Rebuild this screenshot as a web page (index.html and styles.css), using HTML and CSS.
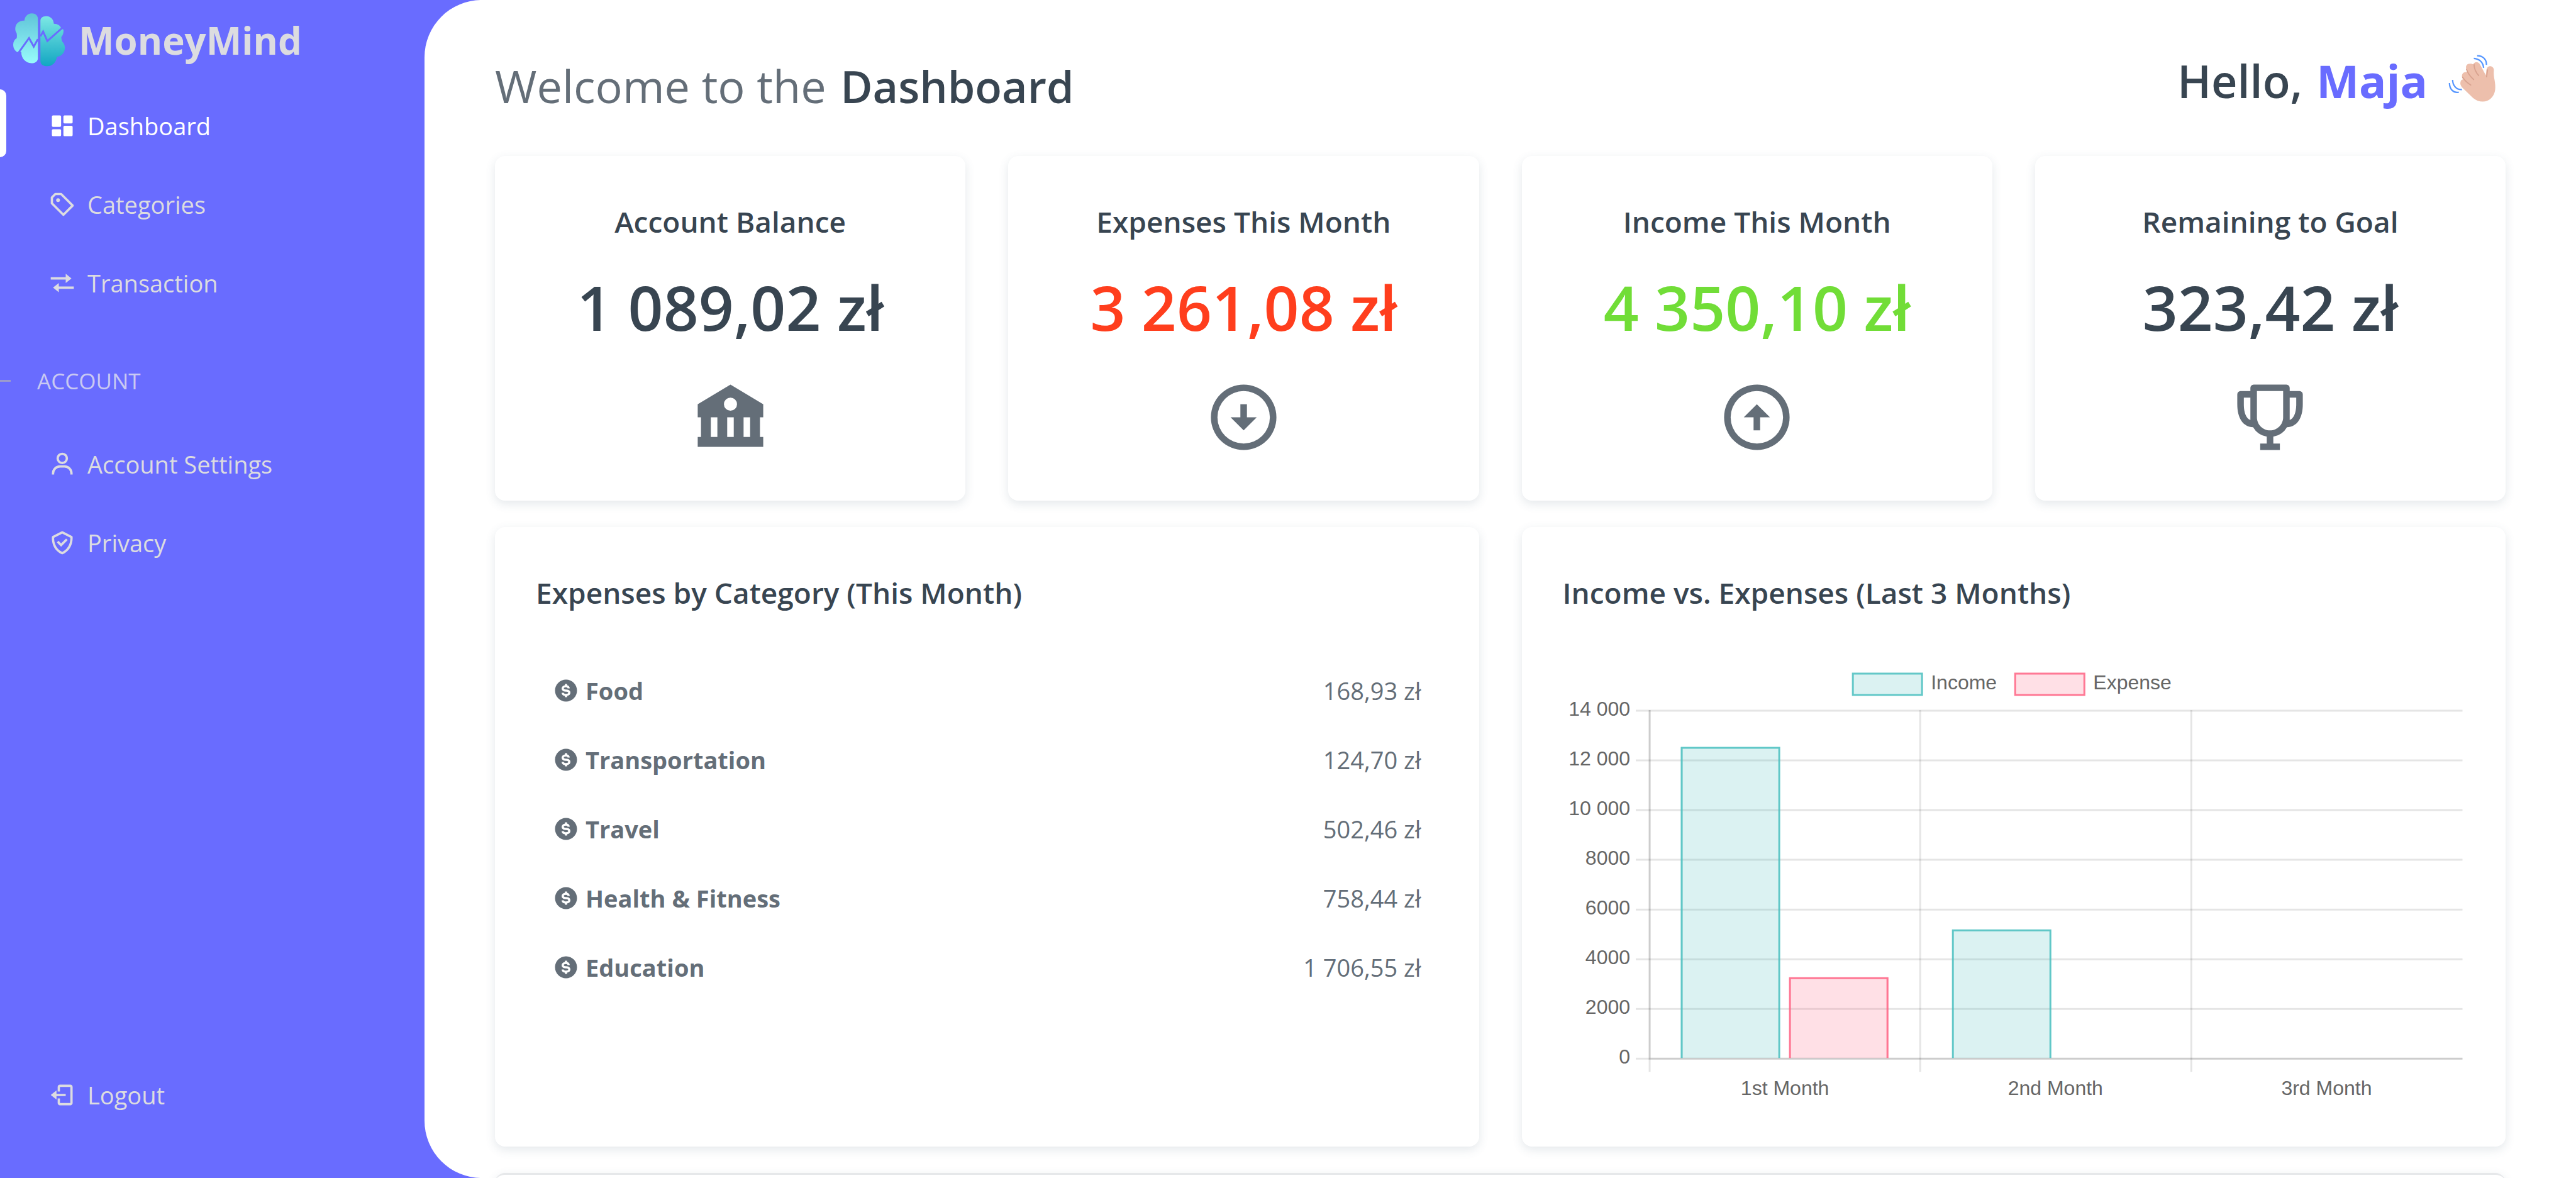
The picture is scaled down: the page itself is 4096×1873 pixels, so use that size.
FILE: index.html
```html
<!DOCTYPE html>
<html lang="en">
<head>
<meta charset="utf-8">
<title>MoneyMind - Dashboard</title>
<link rel="stylesheet" href="styles.css">
</head>
<body>
<svg class="sprite" aria-hidden="true">
  <symbol id="icon-coin" viewBox="0 0 24 24"><path d="M12 2C6.486 2 2 6.486 2 12s4.486 10 10 10 10-4.486 10-10S17.514 2 12 2zm1 14.915V18h-2v-1.080c-2.339-.367-3-2.002-3-2.920h2c.011.143.159 1 2 1 1.380 0 2-.585 2-1 0-.324 0-1-2-1-3.480 0-4-1.880-4-3 0-1.288 1.029-2.584 3-2.915V6.012h2v1.109c1.734.410 2.400 1.853 2.400 2.879h-1l-1 .018C13.386 9.638 13.185 9 12 9c-1.299 0-2 .516-2 1 0 .374 0 1 2 1 3.480 0 4 1.880 4 3 0 1.288-1.029 2.584-3 2.915z"/></symbol>
</svg>
<aside class="sidebar">
  <a class="brand" href="#">
    <svg class="brand-logo" viewBox="0 0 390 390" aria-hidden="true">
      <defs>
        <linearGradient id="brain-left" x1="0" y1="0" x2="0" y2="1"><stop offset="0" stop-color="#5fc4d8"/><stop offset="1" stop-color="#98fbfb"/></linearGradient>
        <linearGradient id="brain-right" x1="0" y1="0" x2="0" y2="1"><stop offset="0" stop-color="#7ce8e4"/><stop offset="1" stop-color="#12a6c2"/></linearGradient>
      </defs>
      <path fill="url(#brain-left)" d="M180 58C180 38 163 25 142 25C117 25 97 43 95 71C60 69 37 92 37 122C37 133 40 142 45 148C48 160 48 172 46 182C32 190 24 205 24 222C24 244 33 262 50 270L75 270C75 310 102 339 139 340C163 341 180 328 180 308Z"/>
      <path fill="url(#brain-right)" d="M196 72C196 54 211 43 233 43C260 43 279 62 281 91C304 91 322 103 328 120L342 128C344 146 339 162 328 175C329 188 331 198 335 205C345 215 351 228 351 242C351 272 330 298 300 300C297 333 272 359 240 359C213 359 196 347 196 326Z"/>
      <path fill="none" stroke="#696cff" stroke-width="12" d="M54 279L124 181L154 235L180 188M196 170L213 140L240 200L342 110"/>
    </svg>
    <span>MoneyMind</span>
  </a>
  <nav class="menu">
    <a class="menu-link active" href="#">
      <svg viewBox="0 0 24 24" aria-hidden="true"><path d="M4 13h6a1 1 0 0 0 1-1V4a1 1 0 0 0-1-1H4a1 1 0 0 0-1 1v8a1 1 0 0 0 1 1zm-1 7a1 1 0 0 0 1 1h6a1 1 0 0 0 1-1v-4a1 1 0 0 0-1-1H4a1 1 0 0 0-1 1v4zm10 0a1 1 0 0 0 1 1h6a1 1 0 0 0 1-1v-7a1 1 0 0 0-1-1h-6a1 1 0 0 0-1 1v7zm1-10h6a1 1 0 0 0 1-1V4a1 1 0 0 0-1-1h-6a1 1 0 0 0-1 1v5a1 1 0 0 0 1 1z"/></svg>
      <span>Dashboard</span>
    </a>
    <a class="menu-link" href="#">
      <svg viewBox="0 0 24 24" aria-hidden="true"><path d="M11.707 2.293A.997.997 0 0 0 11 2H6a.997.997 0 0 0-.707.293l-3 3A.996.996 0 0 0 2 6v5c0 .266.105.520.293.707l10 10a.997.997 0 0 0 1.414 0l8-8a.999.999 0 0 0 0-1.414l-10-10zM13 19.586l-9-9V6.414L6.414 4h4.172l9 9L13 19.586z"/><circle cx="8.353" cy="8.353" r="1.647"/></svg>
      <span>Categories</span>
    </a>
    <a class="menu-link" href="#">
      <svg viewBox="0 0 24 24" aria-hidden="true"><path d="m15 12 5-4-5-4v2.999H2v2h13zm7 3H9v-3l-5 4 5 4v-3h13z"/></svg>
      <span>Transaction</span>
    </a>
    <h2 class="menu-header">ACCOUNT</h2>
    <a class="menu-link" href="#">
      <svg viewBox="0 0 24 24" aria-hidden="true"><path d="M12 2a5 5 0 1 0 5 5 5 5 0 0 0-5-5zm0 8a3 3 0 1 1 3-3 3 3 0 0 1-3 3zm9 11v-1a7 7 0 0 0-7-7h-4a7 7 0 0 0-7 7v1h2v-1a5 5 0 0 1 5-5h4a5 5 0 0 1 5 5v1z"/></svg>
      <span>Account Settings</span>
    </a>
    <a class="menu-link" href="#">
      <svg viewBox="0 0 24 24" aria-hidden="true"><path d="M20.995 6.900a.998.998 0 0 0-.548-.795l-8-4a1 1 0 0 0-.895 0l-8 4a1.002 1.002 0 0 0-.547.795c-.011.107-.961 10.767 8.589 15.014a.987.987 0 0 0 .812 0c9.550-4.247 8.600-14.906 8.589-15.014zM12 19.897C5.231 16.625 4.911 9.642 4.966 7.635L12 4.118l7.029 3.515c.037 1.989-.328 9.018-7.029 12.264z"/><path d="m11 12.586-2.293-2.293-1.414 1.414L11 15.414l5.707-5.707-1.414-1.414z"/></svg>
      <span>Privacy</span>
    </a>
    <a class="menu-link logout" href="#">
      <svg viewBox="0 0 24 24" aria-hidden="true"><path d="m2 12 5 4v-3h8v-2H7V8z"/><path d="M19 3h-9c-1.100 0-2 .9-2 2v4h2V5h9v14h-9v-4H8v4c0 1.100.9 2 2 2h9c1.100 0 2-.9 2-2V5c0-1.100-.9-2-2-2z"/></svg>
      <span>Logout</span>
    </a>
  </nav>
</aside>
<main class="content">
  <header class="page-header">
    <h1>Welcome to the <strong>Dashboard</strong></h1>
    <p class="greeting">Hello, <strong>Maja</strong>
      <svg viewBox="0 0 390 390" role="img" aria-label="Waving hand">
        <path fill="#edbfac" d="M122 200C116 214 121 228 134 242L200 305C236 336 285 337 315 306C346 275 344 236 336 190C332 170 330 150 332 130C332 110 318 104 306 104C292 105 286 118 284 134L281 162L242 90C232 74 208 73 202 94C196 88 180 86 168 91C155 98 152 112 160 128L164 142C150 139 136 144 131 158C128 168 130 178 138 188C130 188 124 192 122 200Z"/>
        <path fill="none" stroke="#d8a28f" stroke-width="7" stroke-linecap="round" d="M134 174Q150 200 186 224M159 124Q170 158 204 189M206 92Q208 134 236 164M292 128L286 172"/>
        <path fill="none" stroke="#5596ff" stroke-width="9" d="M205 55C240 57 264 80 267 115M226 38C262 37 286 62 285 96M71 191C71 226 94 254 130 252M51 211C51 250 76 276 110 269"/>
      </svg>
    </p>
  </header>
  <section class="stats">
    <article class="card stat">
      <h2>Account Balance</h2>
      <p class="amount">1 089,02 zł</p>
      <svg viewBox="0 0 24 24" aria-hidden="true"><path fill-rule="evenodd" d="M2 8v4h1v6H2v3h20v-3h-1v-6h1V8L12 2zm4 10v-6h2v6zm5 0v-6h2v6zm5 0v-6h2v6zM14 8a2 2 0 1 1-4 0 2 2 0 1 1 4 0z"/></svg>
    </article>
    <article class="card stat">
      <h2>Expenses This Month</h2>
      <p class="amount expense">3 261,08 zł</p>
      <svg viewBox="0 0 24 24" aria-hidden="true"><path fill-rule="evenodd" d="M12 2a10 10 0 1 0 0 20 10 10 0 1 0 0-20zm0 2a8 8 0 1 1 0 16 8 8 0 1 1 0-16zM8 12h3V8h2v4h3l-4 4z"/></svg>
    </article>
    <article class="card stat">
      <h2>Income This Month</h2>
      <p class="amount income">4 350,10 zł</p>
      <svg viewBox="0 0 24 24" aria-hidden="true"><path fill-rule="evenodd" d="M12 2a10 10 0 1 0 0 20 10 10 0 1 0 0-20zm0 2a8 8 0 1 1 0 16 8 8 0 1 1 0-16zM8 12h3v4h2v-4h3l-4-4z"/></svg>
    </article>
    <article class="card stat">
      <h2>Remaining to Goal</h2>
      <p class="amount">323,42 zł</p>
      <svg viewBox="0 0 24 24" aria-hidden="true"><path d="M21 4h-3V3a1 1 0 0 0-1-1H7a1 1 0 0 0-1 1v1H3a1 1 0 0 0-1 1v3c0 4.310 1.799 6.910 4.819 7.012A6.001 6.001 0 0 0 11 17.910V20H9v2h6v-2h-2v-2.090a6.010 6.010 0 0 0 4.181-2.898C20.201 14.910 22 12.310 22 8V5a1 1 0 0 0-1-1zM4 8V6h2v6.830C4.216 12.078 4 9.299 4 8zm8 8c-2.206 0-4-1.794-4-4V4h8v8c0 2.206-1.794 4-4 4zm6-3.170V6h2v2c0 1.299-.216 4.078-2 4.830z"/></svg>
    </article>
  </section>
  <section class="panels">
    <article class="card panel">
      <h2>Expenses by Category (This Month)</h2>
      <ul class="categories">
        <li><svg aria-hidden="true"><use href="#icon-coin"/></svg><strong>Food</strong><span>168,93 zł</span></li>
        <li><svg aria-hidden="true"><use href="#icon-coin"/></svg><strong>Transportation</strong><span>124,70 zł</span></li>
        <li><svg aria-hidden="true"><use href="#icon-coin"/></svg><strong>Travel</strong><span>502,46 zł</span></li>
        <li><svg aria-hidden="true"><use href="#icon-coin"/></svg><strong>Health &amp; Fitness</strong><span>758,44 zł</span></li>
        <li><svg aria-hidden="true"><use href="#icon-coin"/></svg><strong>Education</strong><span>1 706,55 zł</span></li>
      </ul>
    </article>
    <article class="card panel">
      <h2>Income vs. Expenses (Last 3 Months)</h2>
      <svg class="chart" viewBox="0 0 1434 717" role="img" aria-label="Income and expenses per month">
        <g class="grid">
          <path d="M116 87H1430M116 166H1430M116 245H1430M116 324H1430M116 403H1430M116 482H1430M116 561H1430M116 640H1430"/>
          <path d="M138 86V661M568 86V661M999 86V661"/>
          <path d="M138 86V640H1430"/>
        </g>
        <g class="bar-income">
          <rect class="fill" x="187" y="145" width="158" height="494"/><path d="M189 639V146H344V639"/>
          <rect class="fill" x="619" y="435" width="157" height="204"/><path d="M620 639V436H775V639"/>
          <rect class="fill" x="461" y="28" width="110" height="34"/><rect class="outline" x="461" y="28" width="110" height="34"/>
        </g>
        <g class="bar-expense">
          <rect class="fill" x="360" y="511" width="158" height="128"/><path d="M361 639V512H516V639"/>
          <rect class="fill" x="719" y="28" width="110" height="34"/><rect class="outline" x="719" y="28" width="110" height="34"/>
        </g>
        <g class="labels">
          <text x="585" y="53">Income</text>
          <text x="843" y="53">Expense</text>
        </g>
        <g class="labels axis-y">
          <text x="107" y="95">14 000</text>
          <text x="107" y="174">12 000</text>
          <text x="107" y="253">10 000</text>
          <text x="107" y="332">8000</text>
          <text x="107" y="411">6000</text>
          <text x="107" y="490">4000</text>
          <text x="107" y="569">2000</text>
          <text x="107" y="648">0</text>
        </g>
        <g class="labels axis-x">
          <text x="353" y="698">1st Month</text>
          <text x="783" y="698">2nd Month</text>
          <text x="1214" y="698">3rd Month</text>
        </g>
      </svg>
    </article>
  </section>
  <section class="card next-card"></section>
</main>
</body>
</html>
```
FILE: styles.css
```css
* { box-sizing: border-box; }

body {
  margin: 0;
  height: 100vh;
  display: flex;
  overflow: hidden;
  background: #696cff;
  color: #646e78;
  font-family: "Open Sans", "Noto Sans", sans-serif;
  font-size: 38px;
}

h1, h2, p, ul { margin: 0; padding: 0; }
a { color: inherit; text-decoration: none; }
svg { display: block; fill: currentColor; }
.sprite { display: none; }

/* Sidebar */
.sidebar {
  flex: 0 0 675px;
  display: flex;
  flex-direction: column;
  color: #dcdce0;
}
.brand {
  display: flex;
  align-items: center;
  gap: 12px;
  padding: 15px 15px 29px;
  font-size: 60px;
  font-weight: 700;
  line-height: 98px;
}
.brand-logo { width: 98px; height: 98px; }
.menu {
  flex: 1;
  display: flex;
  flex-direction: column;
  gap: 17px;
  padding-bottom: 82px;
}
.menu-link {
  position: relative;
  display: flex;
  align-items: center;
  gap: 18px;
  height: 108px;
  padding: 7px 0 0 77px;
  line-height: 50px;
}
.menu-link svg { width: 44px; height: 44px; }
.menu-link.active { color: #fff; }
.menu-link.active::before {
  content: "";
  position: absolute;
  inset: 0 auto 0 0;
  width: 10px;
  background: #fff;
  border-radius: 0 10px 10px 0;
}
.menu-header {
  display: flex;
  align-items: center;
  gap: 42px;
  height: 146px;
  padding-top: 31px;
  font-size: 35px;
  font-weight: 400;
  line-height: 46px;
  color: #c9c9f2;
}
.menu-header::before {
  content: "";
  width: 17px;
  height: 3px;
  background: #9c9ccb;
}
.logout { margin-top: auto; }

/* Content */
.content {
  flex: 1;
  min-width: 0;
  padding: 78px 112px 0;
  background: #fff;
  border-radius: 91px 0 0 91px;
  overflow: hidden;
}
.page-header {
  display: flex;
  justify-content: space-between;
  align-items: flex-start;
  height: 170px;
  line-height: 100px;
}
.page-header h1 {
  padding-top: 8px;
  font-size: 72px;
  font-weight: 400;
}
.page-header h1 strong {
  margin-left: 4px;
  font-size: 70px;
  font-weight: 600;
  color: #384551;
}
.greeting {
  display: flex;
  align-items: center;
  gap: 22px;
  padding-right: 4px;
  font-size: 72px;
  font-weight: 600;
  color: #384551;
}
.greeting strong { font-weight: 700; color: #696cff; }
.greeting svg { width: 98px; height: 98px; }

.card {
  background: #fff;
  border-radius: 16px;
  box-shadow: 0 5px 16px rgba(67, 89, 113, 0.14);
}
.card h2 {
  font-size: 46px;
  font-weight: 600;
  line-height: 60px;
  color: #384551;
}
.stats, .panels {
  display: grid;
  gap: 68px;
  margin-bottom: 42px;
}
.stats { grid-template-columns: repeat(4, 1fr); }
.panels { grid-template-columns: repeat(2, 1fr); }

.stat {
  display: flex;
  flex-direction: column;
  align-items: center;
  padding: 74px 40px 70px;
}
.stat svg { width: 125px; height: 125px; }
.amount {
  margin: 46px 0 53px;
  font-size: 98px;
  font-weight: 600;
  line-height: 120px;
  color: #384551;
}
.expense { color: #ff3e1d; }
.income { color: #71dd37; }

.panel { padding: 74px 65px 63px; }
.panel h2 { margin-bottom: 71px; }
.categories { list-style: none; padding: 0 27px; }
.categories li {
  display: flex;
  align-items: center;
  gap: 10px;
  line-height: 110px;
}
.categories svg { width: 42px; height: 42px; }
.categories span { margin-left: auto; }

/* Chart */
.chart { width: 100%; height: auto; }
.grid path { fill: none; stroke: rgba(0, 0, 0, 0.1); stroke-width: 3; }
.bar-income { fill: #4bc0c0; stroke: #4bc0c0; }
.bar-expense { fill: #ff6384; stroke: #ff6384; }
.bar-income path, .bar-expense path, .outline {
  fill: none;
  stroke-width: 3;
  stroke-opacity: 0.85;
}
.fill { fill-opacity: 0.2; stroke: none; }
.labels {
  font-family: "Liberation Sans", Arial, sans-serif;
  font-size: 32px;
  fill: #666;
}
.axis-y { text-anchor: end; }
.axis-x { text-anchor: middle; }

.next-card {
  height: 300px;
  border-top: 3px solid #e6e8ea;
}
```
